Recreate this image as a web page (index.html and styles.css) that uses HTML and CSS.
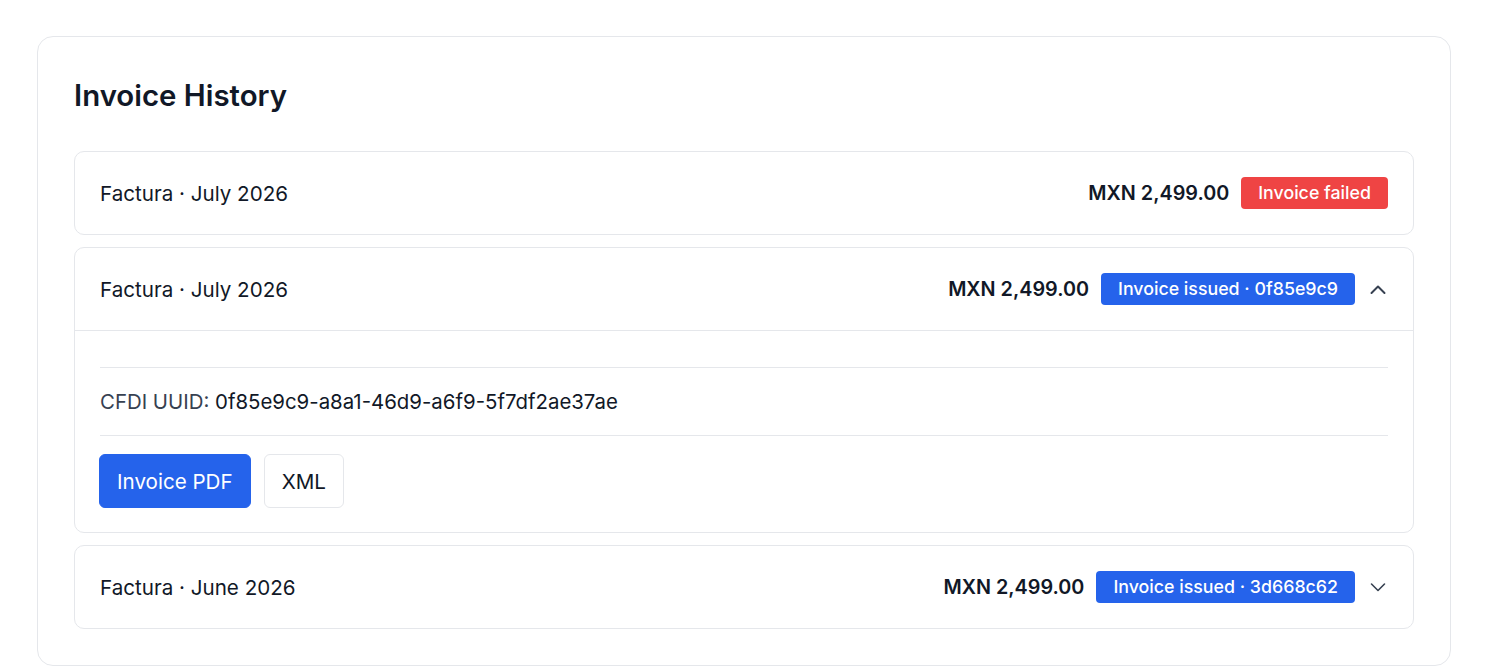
FILE: index.html
```html
<!DOCTYPE html>
<html lang="en">
<head>
    <meta charset="UTF-8">
    <meta name="viewport" content="width=device-width, initial-scale=1.0">
    <title>Invoice History</title>
    <link rel="stylesheet" href="styles.css">
</head>
<body>

<div class="history-card">
    <h2 class="history-title">Invoice History</h2>

    <div class="invoice-list">
        <div class="invoice">
            <div class="invoice-header">
                <span class="invoice-name">Factura · July 2026</span>
                <div class="invoice-meta">
                    <span class="amount">MXN 2,499.00</span>
                    <span class="badge badge-failed">Invoice failed</span>
                </div>
            </div>
        </div>

        <div class="invoice open">
            <div class="invoice-header">
                <span class="invoice-name">Factura · July 2026</span>
                <div class="invoice-meta">
                    <span class="amount">MXN 2,499.00</span>
                    <span class="badge badge-issued">Invoice issued · 0f85e9c9</span>
                    <svg class="chevron" viewBox="0 0 20 20" width="20" height="20">
                        <path d="M3.5 14 L10 7.5 L16.5 14" fill="none" stroke="currentColor" stroke-width="2" stroke-linecap="round" stroke-linejoin="round"/>
                    </svg>
                </div>
            </div>
            <div class="invoice-body">
                <div class="uuid">
                    <span class="uuid-label">CFDI UUID:</span> 0f85e9c9-a8a1-46d9-a6f9-5f7df2ae37ae
                </div>
                <div class="actions">
                    <button class="btn btn-primary">Invoice PDF</button>
                    <button class="btn btn-outline">XML</button>
                </div>
            </div>
        </div>

        <div class="invoice">
            <div class="invoice-header">
                <span class="invoice-name">Factura · June 2026</span>
                <div class="invoice-meta">
                    <span class="amount">MXN 2,499.00</span>
                    <span class="badge badge-issued">Invoice issued · 3d668c62</span>
                    <svg class="chevron" viewBox="0 0 20 20" width="20" height="20">
                        <path d="M3.5 7 L10 13.5 L16.5 7" fill="none" stroke="currentColor" stroke-width="1.6" stroke-linecap="round" stroke-linejoin="round"/>
                    </svg>
                </div>
            </div>
        </div>
    </div>
</div>

</body>
</html>
```

FILE: styles.css
```css
body {
    font-family: Inter, "Noto Sans", sans-serif;
    background-color: #fff;
    color: #111827;
    margin: 0;
    padding: 36px 37px 0 37px;
}
.history-card {
    border: 1px solid #e5e7eb;
    border-radius: 16px;
    padding: 38px 36px 36px 36px;
}
.history-title {
    font-size: 29.4px;
    font-weight: 600;
    margin: 0 0 34px 0;
    line-height: 42px;
    color: #111827;
}
.invoice-list {
    display: flex;
    flex-direction: column;
    gap: 12px;
}
.invoice {
    border: 1px solid #e5e7eb;
    border-radius: 10px;
}
.invoice-header {
    display: flex;
    justify-content: space-between;
    align-items: center;
    padding: 25px 25px;
}
.invoice.open .invoice-header {
    border-bottom: 1px solid #e5e7eb;
}
.invoice-name {
    font-size: 20.6px;
    color: #111827;
}
.invoice-meta {
    display: flex;
    align-items: center;
    gap: 12px;
}
.amount {
    font-size: 19.8px;
    font-weight: 600;
}
.badge {
    color: #fff;
    font-size: 17.8px;
    font-weight: 500;
    line-height: 32px;
    padding: 0 17px;
    border-radius: 4px;
}
.badge-failed {
    background-color: #ef4444;
}
.badge-issued {
    background-color: #2563eb;
}
.chevron {
    color: #374151;
    margin-left: 1px;
}
.invoice-body {
    padding: 36px 25px 24px 24px;
}
.uuid {
    border-top: 1px solid #e5e7eb;
    border-bottom: 1px solid #e5e7eb;
    margin-left: 1px;
    padding: 19px 0;
    font-size: 20.4px;
    line-height: 29px;
    color: #111827;
}
.uuid-label {
    color: #374151;
}
.actions {
    display: flex;
    gap: 13px;
    margin-top: 18px;
}
.btn {
    font-family: Inter, "Noto Sans", sans-serif;
    font-size: 20.6px;
    line-height: 29px;
    padding: 12px 17px 11px 17px;
    border-radius: 6px;
    cursor: pointer;
}
.btn-primary {
    background-color: #2563eb;
    color: #fff;
    border: 1px solid #2563eb;
}
.btn-outline {
    background-color: #fff;
    color: #111827;
    border: 1px solid #e5e7eb;
}
```
